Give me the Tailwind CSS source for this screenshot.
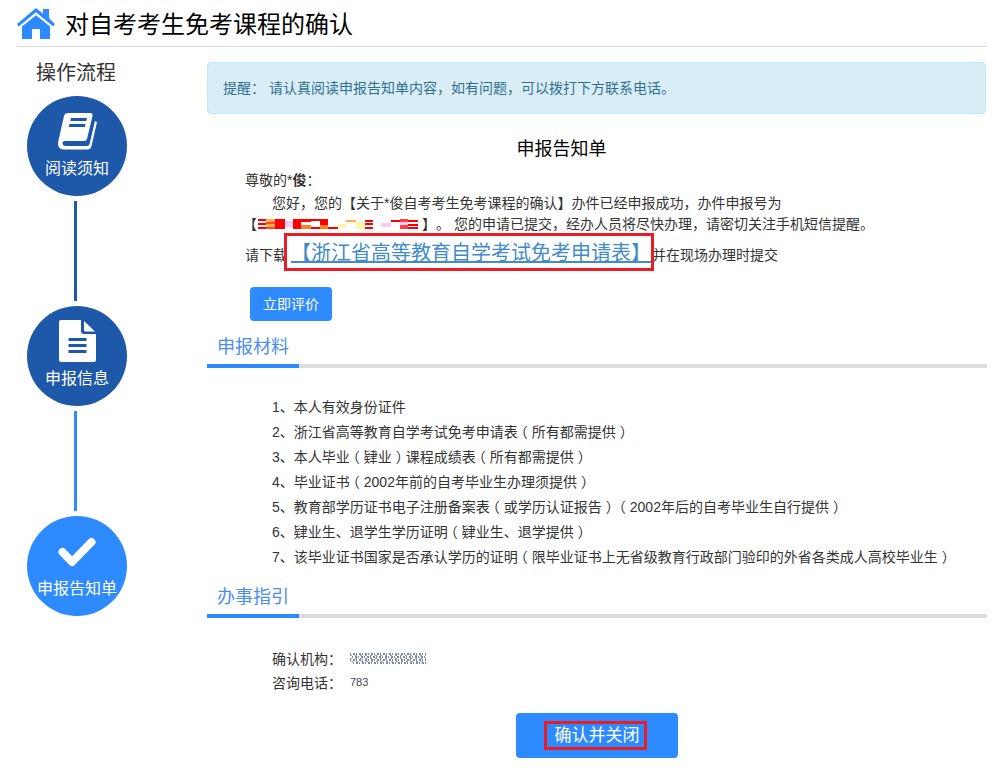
<!DOCTYPE html>
<html lang="zh-CN">
<head>
    <meta charset="UTF-8">
    <title>对自考考生免考课程的确认</title>
    <script src="https://cdn.jsdelivr.net/npm/@tailwindcss/browser@4"></script>
</head>
<body class="bg-white font-['Liberation_Sans','Noto_Sans_CJK_SC',sans-serif] text-[14px] text-[#333] [text-spacing-trim:space-all]">
    <div class="w-[1008px] h-[771px] overflow-hidden">
        <!-- 标题 -->
        <div class="ml-[17px] w-[970px] h-[47px] border-b border-[#ddd] flex items-center gap-[10px]">
            <svg class="w-[38px] h-[32px] mt-[2px]" viewBox="0 0 38 32">
                <path fill="#2e8bff" d="M26 1h6v9l6 6-1.800 2.400L19 4.200 1.800 18.400 0 16 19 0l7 5.800z"/>
                <path fill="#2e8bff" d="M19 7.200 33 18.500V31H23V21h-8v10H5V18.500z"/>
            </svg>
            <h1 class="text-[24px] leading-[30px] text-black mt-[4px]">对自考考生免考课程的确认</h1>
        </div>

        <div class="flex">
            <!-- 操作流程 -->
            <div class="w-[190px] shrink-0 pl-[27px]">
                <div class="w-[100px] text-center text-[20px] leading-[28px] mt-[12px] mb-[9px] pr-[2px]">操作流程</div>
                <div class="w-[100px] h-[100px] rounded-full bg-[#1e58a8] flex flex-col items-center text-white text-[16px]">
                    <svg class="w-[40px] h-[38px] mt-[16px]" viewBox="0 0 40 38">
                        <path fill="#fff" d="M11 1h22q3 0 2.500 3L30 27q-.6 2-3 2H8q-3 0-2.500 2.500T8.500 34H30q2 0 2.600-2L38 9l2 1-5.500 24q-.8 3.500-4 3.500H7q-6 0-6-6 0-1.500.5-3L7 4q.8-3 4-3z"/>
                        <path fill="#1e58a8" d="M14 6h16l-.7 3H13.300zM12.500 12h16l-.7 3H11.800z"/>
                    </svg>
                    <span class="mt-[7px] leading-[24px]">阅读须知</span>
                </div>
                <div class="w-[3px] h-[100px] bg-[#1e58a8] ml-[47px] my-[5px]"></div>
                <div class="w-[100px] h-[100px] rounded-full bg-[#1e58a8] flex flex-col items-center text-white text-[16px]">
                    <svg class="w-[37px] h-[42px] mt-[14px]" viewBox="0 0 37 42">
                        <path fill="#fff" d="M2 0h20v11q0 3 3 3h12v26q0 2-2 2H2q-2 0-2-2V2q0-2 2-2z"/>
                        <path fill="#fff" d="M25 1l11 10.500H26q-1 0-1-1z"/>
                        <path fill="#1e58a8" d="M9.500 18h18v3h-18zM9.500 24h18v3h-18zM9.500 30h18v3h-18z"/>
                    </svg>
                    <span class="mt-[5px] leading-[24px]">申报信息</span>
                </div>
                <div class="w-[3px] h-[100px] bg-[#2e8bff] ml-[47px] my-[5px]"></div>
                <div class="w-[100px] h-[100px] rounded-full bg-[#2e8bff] flex flex-col items-center text-white text-[16px]">
                    <svg class="w-[38px] h-[30px] mt-[21px]" viewBox="0 0 38 30">
                        <path fill="none" stroke="#fff" stroke-width="8" stroke-linecap="round" stroke-linejoin="round" d="M4.500 15l9.500 10L33.500 5"/>
                    </svg>
                    <span class="mt-[10px] leading-[24px] whitespace-nowrap">申报告知单</span>
                </div>
            </div>

            <!-- 内容 -->
            <div class="ml-[17px] w-[780px]">
                <div class="mt-[15px] h-[52px] w-[779px] bg-[#d9edf7] border border-[#bce8f1] rounded-[4px] pl-[15px] flex items-center text-[14px] text-[#31708f]">
                    <span>提醒<span class="font-['Noto_Sans_CJK_TC']">：</span> 请认真阅读申报告知单内容，如有问题，可以拨打下方联系电话。</span>
                </div>

                <h2 class="text-center text-[18px] leading-[24px] text-black mt-[23px] ml-[-71px]">申报告知单</h2>
                <div class="pl-[38px] mt-[8px] leading-[20px] relative">
                    <p class="h-[20px] leading-[20px]">尊敬的*<b>俊</b><span class="font-['Noto_Sans_CJK_TC']">：</span></p>
                    <p class="pl-[27px] mt-[4px] leading-[20px]">您好，您的【关于*俊自考考生免考课程的确认】办件已经申报成功，办件申报号为</p>
                    <p class="flex items-center mt-[1px] -ml-[2px] leading-[20px] whitespace-nowrap">
                        <span>【</span>
                        <!-- 打码的申报号 -->
                        <svg class="w-[160px] h-[12px] ml-[1px] mr-[4px]" viewBox="0 0 160 12">
                            <path fill="#f00" d="M0 1h8v2H0zM0 5h8v2H0zM0 9h8v2H0zM17 1h10v10H17zM35 1h8v10h-8zM43 1h10v3H43zM53 1h9v2h-9zM53 9h9v2h-9zM62 1h8v6h-8zM70 9h10v2H70zM107 2h8v2h-8zM107 5h8v2h-8zM107 9h8v2h-8zM133 2h9v2h-9zM150 2h10v2h-10zM150 6h10v2h-10zM150 9h10v2h-10z"/>
                            <path fill="#ffb040" d="M8 1h9v3H8zM8 6h9v3H8zM88 2h10v2H88z"/>
                            <path fill="#ff4040" d="M8 4h9v2H8zM8 9h9v2H8zM142 1h8v3h-8zM142 7h8v4h-8z"/>
                            <path fill="#ff8020" d="M43 7h10v4H43zM62 7h8v4h-8z"/>
                            <path fill="#fcc8f8" d="M27 3h8v6h-8zM123 5h10v4h-10zM142 4h8v3h-8z"/>
                            <path fill="#fff4b0" d="M80 6h8v4h-8zM98 4h9v7h-9z"/>
                        </svg>
                        <span>】。 您的申请已提交，经办人员将尽快办理，请密切关注手机短信提醒。</span>
                    </p>
                    <p class="relative flex items-center h-[30px] mt-[4px] whitespace-nowrap">
                        <span class="mt-[4px]">请下载</span>
                        <a href="#" class="ml-[4px] w-[360px] text-[20px] leading-[24px] text-[#428bca] underline">【浙江省高等教育自学考试免考申请表】</a>
                        <span class="ml-[1px] mt-[4px]">并在现场办理时提交</span>
                        <span class="absolute left-[39px] top-[-5px] w-[370px] h-[38px] border-[3px] border-[#ed1c24]"></span>
                    </p>
                    <button class="block mt-[19px] ml-[5px] w-[82px] h-[34px] rounded-[4px] bg-[#2e8bff] text-white text-[14px]">立即评价</button>
                </div>

                <div class="mt-[9px] border-b-[4px] border-[#ddd] h-[38px] relative">
                    <span class="block pl-[10px] text-[18px] leading-[34px] text-[#4b8df0]">申报材料</span>
                    <span class="absolute left-0 bottom-[-4px] w-[92px] h-[4px] bg-[#2e8bff]"></span>
                </div>

                <ul class="mt-[27px] pl-[65px] leading-[25px]">
                    <li class="h-[25px]">1、本人有效身份证件</li>
                    <li class="h-[25px]">2、浙江省高等教育自学考试免考申请表<span class="relative -left-[4px]">（</span>所有都需提供<span class="relative left-[4px]">）</span></li>
                    <li class="h-[25px]">3、本人毕业<span class="relative -left-[4px]">（</span>肄业<span class="relative left-[4px]">）</span>课程成绩表<span class="relative -left-[4px]">（</span>所有都需提供<span class="relative left-[4px]">）</span></li>
                    <li class="h-[25px]">4、毕业证书<span class="relative -left-[4px]">（</span>2002年前的自考毕业生办理须提供<span class="relative left-[4px]">）</span></li>
                    <li class="h-[25px]">5、教育部学历证书电子注册备案表<span class="relative -left-[4px]">（</span>或学历认证报告<span class="relative left-[4px]">）</span><span class="relative -left-[4px]">（</span>2002年后的自考毕业生自行提供<span class="relative left-[4px]">）</span></li>
                    <li class="h-[25px]">6、肄业生、退学生学历证明<span class="relative -left-[4px]">（</span>肄业生、退学提供<span class="relative left-[4px]">）</span></li>
                    <li class="h-[25px]">7、该毕业证书国家是否承认学历的证明<span class="relative -left-[4px]">（</span>限毕业证书上无省级教育行政部门验印的外省各类成人高校毕业生<span class="relative left-[4px]">）</span></li>
                </ul>

                <div class="mt-[10px] border-b-[4px] border-[#ddd] h-[38px] relative">
                    <span class="block pl-[10px] text-[18px] leading-[34px] text-[#4b8df0]">办事指引</span>
                    <span class="absolute left-0 bottom-[-4px] w-[92px] h-[4px] bg-[#2e8bff]"></span>
                </div>

                <div class="mt-[28px] pl-[65px] leading-[24px]">
                    <div class="flex items-center h-[24px]">
                        <span class="w-[78px]">确认机构<span class="font-['Noto_Sans_CJK_TC']">：</span></span>
                        <svg class="w-[77px] h-[12px]" viewBox="0 0 77 12">
                            <path stroke="#50657e" stroke-width="1.500" stroke-dasharray="1 2 2 1" fill="none" d="M0 2h76M2 5h74M0 8h76M3 11h73"/>
                            <path stroke="#8fa3b8" stroke-width="1" stroke-dasharray="2 3" fill="none" d="M0 3.500h76M0 6.500h76M1 9.500h75"/>
                        </svg>
                    </div>
                    <div class="flex items-center h-[24px]">
                        <span class="w-[78px]">咨询电话<span class="font-['Noto_Sans_CJK_TC']">：</span></span>
                        <span class="text-[11px] text-[#445]">783</span>
                    </div>
                </div>

                <button class="block relative mt-[19px] ml-[309px] w-[162px] h-[45px] rounded-[4px] bg-[#2e8bff] text-white text-[17px]">
                    确认并关闭
                    <span class="absolute left-[28px] top-[8px] w-[103px] h-[29px] border-[3px] border-[#ed1c24]"></span>
                </button>
            </div>
        </div>
    </div>
</body>
</html>
